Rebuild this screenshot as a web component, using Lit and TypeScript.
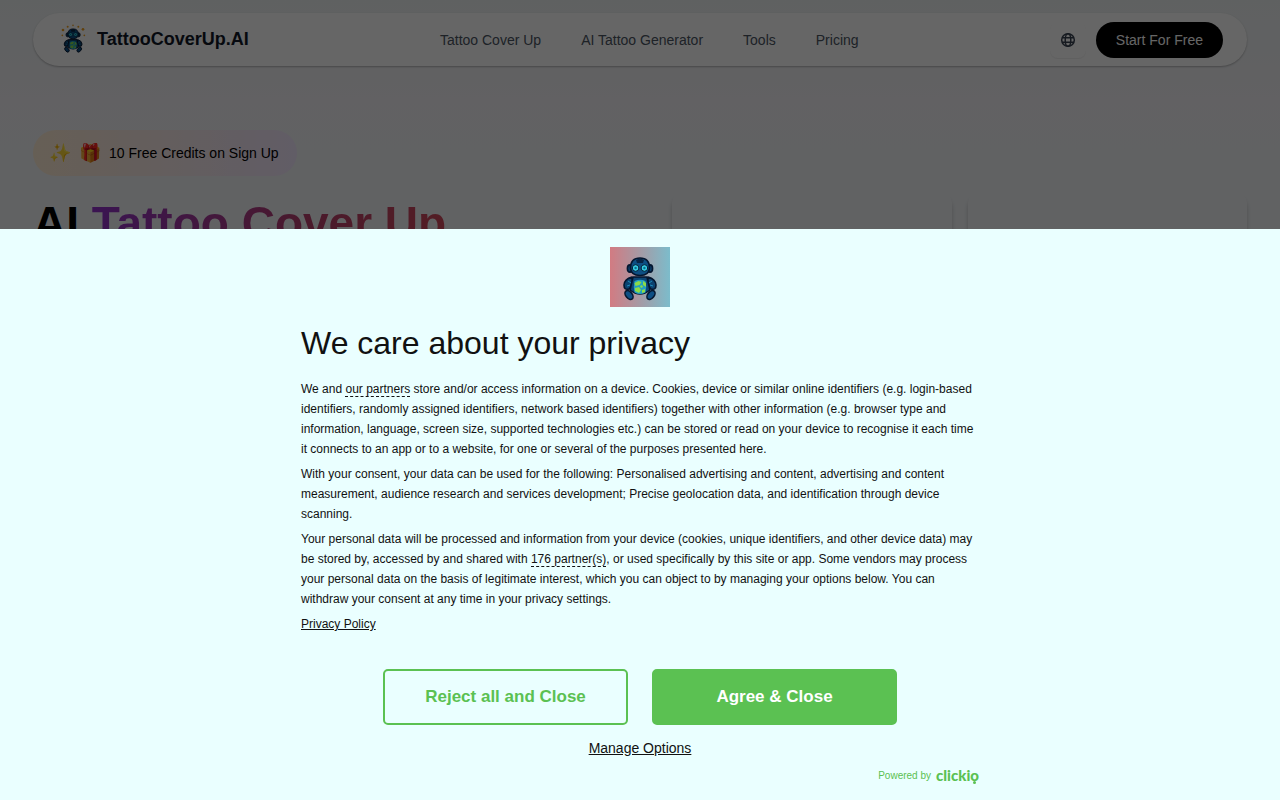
import { LitElement, html, css, svg } from "lit";
import { customElement } from "lit/decorators.js";

const robot = svg`
  <g stroke="#04162f" stroke-width="1.6" stroke-linejoin="round">
    <ellipse cx="14" cy="14.5" rx="2.6" ry="3.6" fill="#0b3c68"/>
    <ellipse cx="34" cy="14.5" rx="2.6" ry="3.6" fill="#0b3c68"/>
    <path d="M16 23 Q8.500 25 8 31 Q8 36.500 13 35 L17 31Z" fill="#0b4270"/>
    <path d="M32 23 Q39.500 25 40 31 Q40 36.500 35 35 L31 31Z" fill="#0b4270"/>
    <path d="M17 23 H31 L34 36 Q24 44 14 36Z" fill="#0c4776"/>
    <ellipse cx="13" cy="41" rx="5" ry="3.200" transform="rotate(50 13 41)" fill="#0d4f84"/>
    <ellipse cx="35" cy="41" rx="5" ry="3.200" transform="rotate(-50 35 41)" fill="#0d4f84"/>
    <path d="M14.500 14 Q14.500 4 24 4 Q33.500 4 33.500 14 Q33 21.500 24 21.500 Q15 21.500 14.500 14Z" fill="#0d4f84"/>
  </g>
  <path d="M20 6 Q24 3.500 28 6 L27 9 H21Z" fill="#082444"/>
  <circle cx="19.600" cy="14" r="3.300" fill="#38cfe4" stroke="#052138"/>
  <circle cx="28.400" cy="14" r="3.300" fill="#38cfe4" stroke="#052138"/>
  <circle cx="19.600" cy="14" r="1.200" fill="#0a6d90"/>
  <circle cx="28.400" cy="14" r="1.200" fill="#0a6d90"/>
  <path d="M18.500 27 Q24 24.500 29.500 27 Q31 33 29.500 38.500 Q24 41.500 18.500 38.500 Q17 33 18.500 27Z" fill="#239fc3"/>
  <path d="M18.500 29 l4 -2 3 1 -2 3 -4 1z M27 27 l3 2 0 4 -3 -2z M19 34 l4 -1 2 3 -2 3 -4 -2z M26 36 l3 -1 0 3 -3 1z M25 31 l2 1 -1 2 -2 -1z" fill="#8bdc48"/>
  <path d="M12 27 l3 2 M36 27 l-3 2 M11 32 l3 -1 M37 32 l-3 -1" stroke="#1e8bbb"/>`;

@customElement("app-root")
export class AppRoot extends LitElement {
  static styles = css`
    :host {
      display: block;
      font-family: "Liberation Sans", Arial, sans-serif;
      color: #111827;
    }
    * {
      box-sizing: border-box;
    }
    a {
      color: inherit;
      text-decoration: none;
    }
    button {
      font: inherit;
      cursor: pointer;
      border: 0;
    }
    .page {
      height: 100vh;
      overflow: hidden;
      padding: 13px 33px 0;
      background: linear-gradient(180deg, #eef3f3 0, #f4f3f7 100px, #f2f5f8 200px);
    }
    .header {
      display: flex;
      justify-content: space-between;
      align-items: center;
      height: 53px;
      padding: 0 24px;
      border-radius: 27px;
      background: #fff;
      box-shadow: 0 1px 2px #0004;
    }
    .brand {
      display: flex;
      align-items: center;
      gap: 8px;
      font-size: 18px;
      font-weight: 700;
    }
    .brand svg {
      width: 32px;
      height: 32px;
    }
    .nav {
      display: flex;
      gap: 40px;
      font-size: 14px;
      color: #4b5563;
    }
    .tools {
      display: flex;
      align-items: center;
      gap: 10px;
    }
    .lang {
      display: grid;
      place-items: center;
      width: 36px;
      height: 36px;
      padding: 0;
      border-radius: 8px;
      background: #fff;
      box-shadow: 0 1px 1px #0001;
    }
    .lang svg {
      width: 16px;
      height: 16px;
    }
    .start {
      height: 36px;
      padding: 0 20px;
      border-radius: 18px;
      background: #000;
      color: #fff;
      font-size: 14px;
    }
    .hero {
      display: grid;
      grid-template-columns: 1fr 575px;
      gap: 64px;
      margin-top: 64px;
    }
    .badge {
      display: inline-flex;
      align-items: center;
      gap: 8px;
      height: 46px;
      padding: 0 18px 0 16px;
      border-radius: 23px;
      background: linear-gradient(90deg, #ffedd5, #f3e8ff);
      color: #000;
      font-size: 14px;
    }
    .emoji {
      font-size: 18px;
    }
    .title {
      margin: 23px 0 0;
      font-size: 46px;
      line-height: 48px;
      font-weight: 700;
      white-space: nowrap;
      color: #000;
    }
    .accent {
      background: linear-gradient(90deg, #9234cc, #b8406e 60%, #d04a5c);
      -webkit-background-clip: text;
      background-clip: text;
      color: transparent;
    }
    .cards {
      display: grid;
      grid-template-columns: 1fr 1fr;
      gap: 16px;
      padding-top: 62px;
    }
    .card {
      height: 320px;
      border-radius: 12px;
      background: #f3f5f8;
      box-shadow: 0 5px 4px #0003;
    }
    .overlay {
      position: fixed;
      inset: 0;
      display: flex;
      flex-direction: column;
      justify-content: flex-end;
      background: rgba(0, 0, 0, 0.6);
    }
    .consent {
      padding: 18px 24px 15px;
      background: #eaffff;
      color: #111;
    }
    .inner {
      max-width: 678px;
      margin: 0 auto;
      display: flex;
      flex-direction: column;
    }
    .logo {
      align-self: center;
      display: block;
      width: 60px;
      height: 60px;
      background: linear-gradient(90deg, #d27b82, #a59aa5 50%, #7cbccb);
    }
    .heading {
      margin: 16px 0;
      font-size: 32px;
      line-height: 40px;
      font-weight: 400;
    }
    .text {
      margin: 0 0 5px;
      font-size: 12px;
      line-height: 20px;
    }
    .partners {
      border-bottom: 1px dashed #111;
    }
    .underlined {
      text-decoration: underline;
    }
    .actions {
      display: flex;
      justify-content: center;
      gap: 24px;
      margin-top: 30px;
    }
    .action {
      width: 245px;
      height: 56px;
      border: 2px solid #5bc152;
      border-radius: 5px;
      background: transparent;
      color: #5bc152;
      font-size: 17px;
      font-weight: 700;
    }
    .primary {
      background: #5bc152;
      color: #fff;
    }
    .manage {
      align-self: center;
      margin-top: 13px;
      padding: 0;
      background: none;
      color: #111;
      font-size: 14px;
      line-height: 20px;
      text-decoration: underline;
    }
    .powered {
      align-self: flex-end;
      display: flex;
      align-items: center;
      gap: 5px;
      height: 18px;
      margin: 8px 0 1px;
      font-size: 10px;
      color: #5bc152;
    }
    .clickio {
      position: relative;
      font-family: Lato, sans-serif;
      font-size: 15px;
      line-height: 18px;
      font-weight: 900;
    }
    .clickio::after {
      content: "";
      position: absolute;
      right: 3px;
      bottom: 0;
      width: 3px;
      height: 3px;
      border-radius: 50%;
      background: #5bc152;
    }
  `;

  render() {
    return html`
      <div class="page">
        <header class="header">
          <a class="brand" href="#">
            <svg viewBox="0 0 48 48" aria-hidden="true">
              <g transform="translate(4 4) scale(.84)">${robot}</g>
              <g fill="#f0a020">
                <circle cx="9" cy="9" r="2"/><circle cx="16" cy="4" r="1.5"/>
                <circle cx="24" cy="2" r="1.2"/><circle cx="32" cy="4" r="1.5"/>
                <circle cx="39" cy="8" r="2"/><circle cx="41" cy="17" r="1.3"/>
                <circle cx="8" cy="17" r="1.3"/>
              </g>
            </svg>
            TattooCoverUp.AI
          </a>
          <nav class="nav">
            <a href="#">Tattoo Cover Up</a><a href="#">AI Tattoo Generator</a
            ><a href="#">Tools</a><a href="#">Pricing</a>
          </nav>
          <div class="tools">
            <button class="lang" aria-label="Language">
              <svg viewBox="0 0 24 24" fill="none" stroke="#374151" stroke-width="2.2">
                <circle cx="12" cy="12" r="9.5"/><ellipse cx="12" cy="12" rx="4.2" ry="9.5"/>
                <path d="M3 8.500h18M3 15.500h18"/>
              </svg>
            </button>
            <button class="start">Start For Free</button>
          </div>
        </header>
        <main class="hero">
          <div>
            <div class="badge">
              <span class="emoji">✨</span><span class="emoji">🎁</span>
              <span>10 Free Credits on Sign Up</span>
            </div>
            <h1 class="title">AI <span class="accent">Tattoo Cover Up</span></h1>
          </div>
          <div class="cards"><div class="card"></div><div class="card"></div></div>
        </main>
      </div>
      <div class="overlay">
        <section class="consent" role="dialog" aria-labelledby="privacy-title">
          <div class="inner">
            <svg class="logo" viewBox="0 0 60 60" role="img" aria-label="TattooCoverUp.AI">
              <g transform="translate(6 7)">${robot}</g>
            </svg>
            <h2 class="heading" id="privacy-title">We care about your privacy</h2>
            <p class="text">We and <a class="partners" href="#">our partners</a> store and/or access information on a device. Cookies, device or similar online identifiers (e.g. login-based identifiers, randomly assigned identifiers, network based identifiers) together with other information (e.g. browser type and information, language, screen size, supported technologies etc.) can be stored or read on your device to recognise it each time it connects to an app or to a website, for one or several of the purposes presented here.</p>
            <p class="text">With your consent, your data can be used for the following: Personalised advertising and content, advertising and content measurement, audience research and services development; Precise geolocation data, and identification through device scanning.</p>
            <p class="text">Your personal data will be processed and information from your device (cookies, unique identifiers, and other device data) may be stored by, accessed by and shared with <a class="partners" href="#">176 partner(s)</a>, or used specifically by this site or app. Some vendors may process your personal data on the basis of legitimate interest, which you can object to by managing your options below. You can withdraw your consent at any time in your privacy settings.</p>
            <p class="text"><a class="underlined" href="#">Privacy Policy</a></p>
            <div class="actions">
              <button class="action">Reject all and Close</button>
              <button class="action primary">Agree &amp; Close</button>
            </div>
            <button class="manage">Manage Options</button>
            <a class="powered" href="#">Powered by <span class="clickio">clickio</span></a>
          </div>
        </section>
      </div>
    `;
  }
}
